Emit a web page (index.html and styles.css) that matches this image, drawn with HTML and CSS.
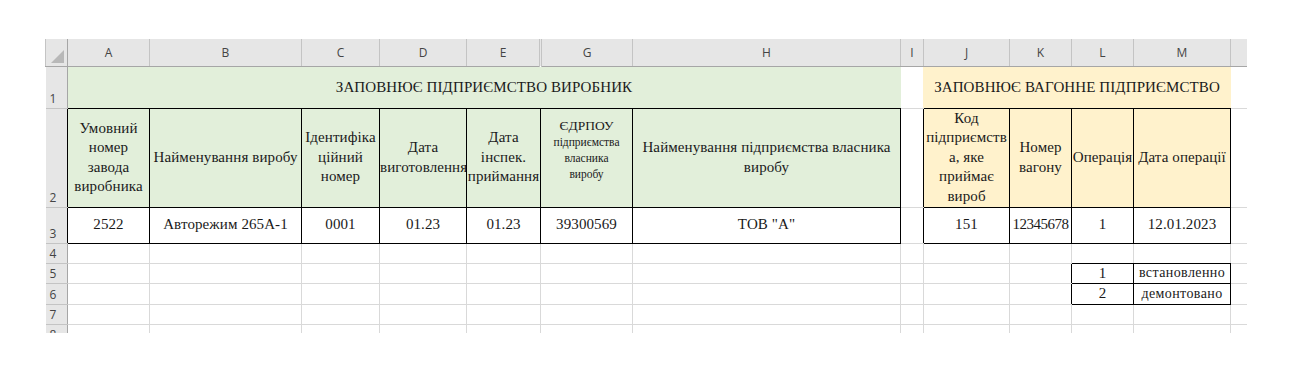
FILE: index.html
```html
<!DOCTYPE html>
<html lang="uk">
<head>
<meta charset="utf-8">
<title>Аркуш</title>
<link rel="stylesheet" href="styles.css">
</head>
<body>
<div class="page">
  <div class="sheet">
    <table class="grid">
      <colgroup>
        <col class="c-hdr"><col class="c-a"><col class="c-b"><col class="c-c"><col class="c-d"><col class="c-e"><col class="c-g"><col class="c-h"><col class="c-i"><col class="c-j"><col class="c-k"><col class="c-l"><col class="c-m"><col class="c-n">
      </colgroup>
      <thead>
        <tr class="colhdr">
          <th class="corner"><span class="tri"></span></th>
          <th>A</th><th>B</th><th>C</th><th>D</th><th class="hidden-after">E</th><th>G</th><th>H</th><th>I</th><th>J</th><th>K</th><th>L</th><th>M</th><th class="last"></th>
        </tr>
      </thead>
      <tbody>
        <tr class="r1">
          <th class="rowhdr">1</th>
          <td colspan="7" class="title green">ЗАПОВНЮЄ ПІДПРИЄМСТВО ВИРОБНИК</td>
          <td class="gap-top"></td>
          <td colspan="4" class="title orange">ЗАПОВНЮЄ ВАГОННЕ ПІДПРИЄМСТВО</td>
          <td></td>
        </tr>
        <tr class="r2">
          <th class="rowhdr rb">2</th>
          <td class="box green">Умовний<br>номер<br>завода<br>виробника</td>
          <td class="box green">Найменування виробу</td>
          <td class="box green">Ідентифіка<br>ційний<br>номер</td>
          <td class="box green">Дата<br>виготовлення</td>
          <td class="box green">Дата<br>інспек.<br>приймання</td>
          <td class="box green small"><span class="big">ЄДРПОУ</span><br>підприємства<br>власника<br>виробу</td>
          <td class="box green">Найменування підприємства власника<br>виробу</td>
          <td class="rb"></td>
          <td class="box orange">Код<br>підприємств<br>а, яке<br>приймає<br>вироб</td>
          <td class="box orange">Номер<br>вагону</td>
          <td class="box orange">Операція</td>
          <td class="box orange">Дата операції</td>
          <td></td>
        </tr>
        <tr class="r3">
          <th class="rowhdr rb">3</th>
          <td class="box">2522</td>
          <td class="box">Авторежим 265А-1</td>
          <td class="box">0001</td>
          <td class="box">01.23</td>
          <td class="box">01.23</td>
          <td class="box">39300569</td>
          <td class="box">ТОВ "А"</td>
          <td class="rb"></td>
          <td class="box">151</td>
          <td class="box tight">12345678</td>
          <td class="box">1</td>
          <td class="box">12.01.2023</td>
          <td></td>
        </tr>
        <tr class="rs">
          <th class="rowhdr">4</th>
          <td></td><td></td><td></td><td></td><td></td><td></td><td></td><td></td><td></td><td></td>
          <td class="bb"></td><td class="bb"></td><td></td>
        </tr>
        <tr class="rs">
          <th class="rowhdr">5</th>
          <td></td><td></td><td></td><td></td><td></td><td></td><td></td><td></td><td></td><td class="rb"></td>
          <td class="box">1</td><td class="box legend">встановленно</td><td></td>
        </tr>
        <tr class="rs">
          <th class="rowhdr">6</th>
          <td></td><td></td><td></td><td></td><td></td><td></td><td></td><td></td><td></td><td class="rb"></td>
          <td class="box">2</td><td class="box legend">демонтовано</td><td></td>
        </tr>
        <tr class="rs">
          <th class="rowhdr">7</th>
          <td></td><td></td><td></td><td></td><td></td><td></td><td></td><td></td><td></td><td></td>
          <td></td><td></td><td></td>
        </tr>
        <tr class="rs">
          <th class="rowhdr">8</th>
          <td></td><td></td><td></td><td></td><td></td><td></td><td></td><td></td><td></td><td></td>
          <td></td><td></td><td></td>
        </tr>
      </tbody>
    </table>
  </div>
</div>
</body>
</html>
```
FILE: styles.css
```css
html, body {
  margin: 0;
  padding: 0;
  background: #ffffff;
}

.page {
  padding: 39px 0 0 45px;
}

.sheet {
  width: 1202px;
  height: 294px;
  overflow: hidden;
}

.grid {
  border-collapse: collapse;
  table-layout: fixed;
  width: 1202px;
  font-family: "Liberation Serif", "Times New Roman", serif;
  font-size: 15px;
  letter-spacing: 0.1px;
  color: #1a1a1a;
}

.c-hdr { width: 22px; }
.c-a { width: 82px; }
.c-b { width: 152px; }
.c-c { width: 78px; }
.c-d { width: 87px; }
.c-e { width: 74px; }
.c-g { width: 92px; }
.c-h { width: 268px; }
.c-i { width: 23px; }
.c-j { width: 86px; }
.c-k { width: 62px; }
.c-l { width: 62px; }
.c-m { width: 97px; }
.c-n { width: 17px; }

.grid td {
  border: 1px solid #d9d9d9;
  padding: 0;
  text-align: center;
  vertical-align: middle;
  white-space: nowrap;
  overflow: hidden;
}

/* column letters */
.colhdr {
  height: 27px;
}
.colhdr th {
  background: #e6e6e6;
  border: 1px solid #c4c4c4;
  border-top: none;
  border-bottom: 1px solid #a6a6a6;
  font-family: "Open Sans", "Liberation Sans", sans-serif;
  font-weight: 400;
  font-size: 12px;
  letter-spacing: 0;
  color: #444;
  padding: 0;
  text-align: center;
  vertical-align: middle;
}
.colhdr th.hidden-after {
  border-right: 3px double #c4c4c4;
}
.colhdr th.last {
  border-right: none;
}
.colhdr th.corner {
  position: relative;
  border-right: 1px solid #a6a6a6;
}
.tri {
  position: absolute;
  right: 3px;
  bottom: 3px;
  width: 0;
  height: 0;
  border-left: 13px solid transparent;
  border-bottom: 13px solid #b8b8b8;
}

/* row numbers */
.rowhdr {
  background: #e6e6e6;
  border: 1px solid #c4c4c4;
  border-left: none;
  border-right: 1px solid #a6a6a6;
  font-family: "Open Sans", "Liberation Sans", sans-serif;
  font-weight: 400;
  font-size: 12px;
  letter-spacing: 0;
  color: #444;
  padding: 0 0 1px 4px;
  text-align: left;
  vertical-align: bottom;
  line-height: 16px;
}

.r1 { height: 42px; }
.r2 { height: 99px; }
.r3 { height: 36px; }
.rs { height: 20px; }

.green { background: #e2efda; }
.orange { background: #fff2cc; }

.grid td.title {
  border-top-color: transparent;
  border-bottom: 1px solid #000;
}
.grid td.title.green {
  border-left-color: #e2efda;
  border-right-color: #e2efda;
}
.grid td.title.orange {
  border-left-color: #fff2cc;
  border-right-color: #fff2cc;
}
.grid td.gap-top {
  border-right-color: #fff2cc;
}

.grid td.box {
  border: 1px solid #000;
  line-height: 19.5px;
}
.grid .rb {
  border-right: 1px solid #000;
}
.grid td.bb {
  border-bottom: 1px solid #000;
}

.grid td.small {
  font-size: 11.5px;
  line-height: 16px;
  letter-spacing: 0;
  padding-bottom: 16px;
}
.small .big {
  font-size: 13.5px;
}

.grid td.tight {
  letter-spacing: -0.5px;
}
.grid td.legend {
  font-size: 14px;
  letter-spacing: 0.4px;
  line-height: 18px;
}
```
